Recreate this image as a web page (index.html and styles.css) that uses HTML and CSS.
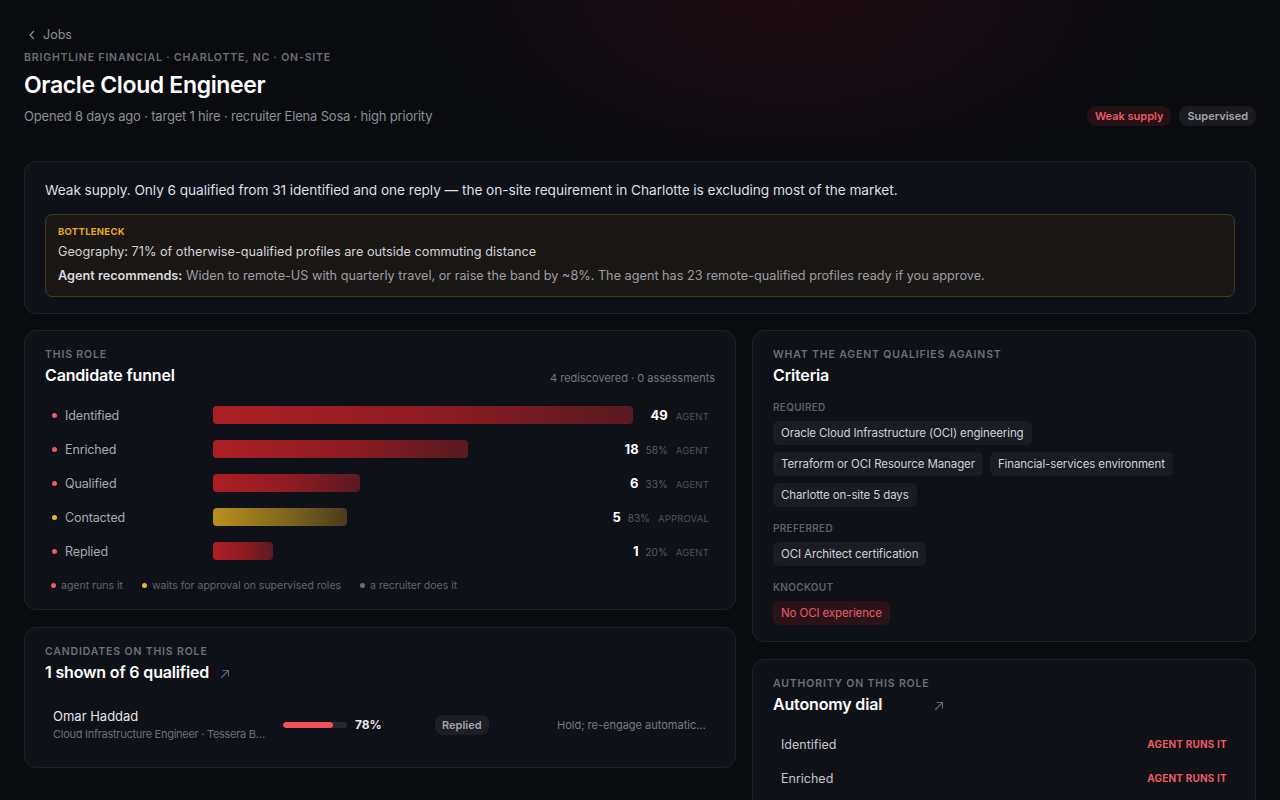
FILE: index.html
```html
<!DOCTYPE html>
<html>
<head>
    <title>Oracle Cloud Engineer · Jobs</title>
    <link rel="stylesheet" href="styles.css">
</head>
<body>
<div class="page">
    <header class="head">
        <a class="back" href="#">
            <svg width="10" height="10" viewBox="0 0 10 10"><path d="M6.5 1.5 3 5l3.5 3.5" fill="none" stroke="currentColor" stroke-width="1.3" stroke-linecap="round" stroke-linejoin="round"/></svg>
            Jobs
        </a>
        <div class="eyebrow">Brightline Financial · Charlotte, NC · On-site</div>
        <h1>Oracle Cloud Engineer</h1>
        <div class="head-row">
            <p class="meta">Opened 8 days ago · target 1 hire · recruiter Elena Sosa · high priority</p>
            <div class="badges">
                <span class="badge badge-red">Weak supply</span>
                <span class="badge">Supervised</span>
            </div>
        </div>
    </header>

    <section class="card summary">
        <p class="summary-text">Weak supply. Only 6 qualified from 31 identified and one reply — the on-site requirement in Charlotte is excluding most of the market.</p>
        <div class="bottleneck">
            <div class="bottleneck-label">Bottleneck</div>
            <p class="bottleneck-main">Geography: 71% of otherwise-qualified profiles are outside commuting distance</p>
            <p class="bottleneck-rec"><strong>Agent recommends:</strong> Widen to remote-US with quarterly travel, or raise the band by ~8%. The agent has 23 remote-qualified profiles ready if you approve.</p>
        </div>
    </section>

    <div class="grid">
        <div class="col">
            <section class="card funnel-card">
                <div class="card-head">
                    <div>
                        <div class="eyebrow">This role</div>
                        <h2>Candidate funnel</h2>
                    </div>
                    <div class="card-note">4 rediscovered · 0 assessments</div>
                </div>
                <div class="funnel">
                    <div class="stage">
                        <span class="stage-name"><i class="dot dot-red"></i>Identified</span>
                        <div class="track"><div class="bar" style="width: 100%"></div></div>
                        <span class="stats"><b>49</b><em class="tag">Agent</em></span>
                    </div>
                    <div class="stage">
                        <span class="stage-name"><i class="dot dot-red"></i>Enriched</span>
                        <div class="track"><div class="bar" style="width: 60.7%"></div></div>
                        <span class="stats"><b>18</b><span class="pct">58%</span><em class="tag">Agent</em></span>
                    </div>
                    <div class="stage">
                        <span class="stage-name"><i class="dot dot-red"></i>Qualified</span>
                        <div class="track"><div class="bar" style="width: 35%"></div></div>
                        <span class="stats"><b>6</b><span class="pct">33%</span><em class="tag">Agent</em></span>
                    </div>
                    <div class="stage">
                        <span class="stage-name"><i class="dot dot-amber"></i>Contacted</span>
                        <div class="track"><div class="bar bar-amber" style="width: 31.9%"></div></div>
                        <span class="stats"><b>5</b><span class="pct">83%</span><em class="tag">Approval</em></span>
                    </div>
                    <div class="stage">
                        <span class="stage-name"><i class="dot dot-red"></i>Replied</span>
                        <div class="track"><div class="bar" style="width: 14.3%"></div></div>
                        <span class="stats"><b>1</b><span class="pct">20%</span><em class="tag">Agent</em></span>
                    </div>
                </div>
                <div class="legend">
                    <span><i class="dot dot-red"></i>agent runs it</span>
                    <span><i class="dot dot-amber"></i>waits for approval on supervised roles</span>
                    <span><i class="dot dot-gray"></i>a recruiter does it</span>
                </div>
            </section>

            <section class="card cand-card">
                <div class="eyebrow">Candidates on this role</div>
                <h2 class="title-link">1 shown of 6 qualified
                    <svg width="12" height="12" viewBox="0 0 12 12"><path d="M2.5 9.5l7-7M4 2.5h5.5V8" fill="none" stroke="currentColor" stroke-width="1.1" stroke-linecap="round"/></svg>
                </h2>
                <div class="cand">
                    <div class="cand-who">
                        <div class="cand-name">Omar Haddad</div>
                        <div class="cand-sub">Cloud Infrastructure Engineer · Tessera Bank</div>
                    </div>
                    <div class="score">
                        <div class="score-track"><div class="score-fill" style="width: 78%"></div></div>
                        <b>78%</b>
                    </div>
                    <span class="pill">Replied</span>
                    <div class="cand-next">Hold; re-engage automatically in 30 days</div>
                </div>
            </section>
        </div>

        <div class="col">
            <section class="card crit-card">
                <div class="eyebrow">What the agent qualifies against</div>
                <h2>Criteria</h2>
                <div class="crit-label">Required</div>
                <div class="chips">
                    <span class="chip">Oracle Cloud Infrastructure (OCI) engineering</span>
                    <span class="chip">Terraform or OCI Resource Manager</span>
                    <span class="chip">Financial-services environment</span>
                    <span class="chip">Charlotte on-site 5 days</span>
                </div>
                <div class="crit-label">Preferred</div>
                <div class="chips">
                    <span class="chip">OCI Architect certification</span>
                </div>
                <div class="crit-label">Knockout</div>
                <div class="chips">
                    <span class="chip chip-red">No OCI experience</span>
                </div>
            </section>

            <section class="card">
                <div class="eyebrow">Authority on this role</div>
                <h2 class="title-link wide">Autonomy dial
                    <svg width="12" height="12" viewBox="0 0 12 12"><path d="M2.5 9.5l7-7M4 2.5h5.5V8" fill="none" stroke="currentColor" stroke-width="1.1" stroke-linecap="round"/></svg>
                </h2>
                <div class="dial">
                    <div class="dial-row"><span>Identified</span><em>Agent runs it</em></div>
                    <div class="dial-row"><span>Enriched</span><em>Agent runs it</em></div>
                    <div class="dial-row"><span>Qualified</span><em>Agent runs it</em></div>
                </div>
            </section>
        </div>
    </div>
</div>
</body>
</html>
```

FILE: styles.css
```css
html, body { height: 100%; }
body {
    margin: 0;
    background: #0a0b0f radial-gradient(ellipse 520px 260px at 62% 0%, rgba(110, 18, 30, 0.2), transparent 70%) no-repeat;
    color: #d6d7db;
    font-family: Inter, "Noto Sans", sans-serif;
    font-size: 14px;
    overflow: hidden;
}
p { margin: 0; }
h1, h2 { margin: 0; color: #fff; font-weight: 600; }

.page { padding: 26px 24px 0; }

.back { display: inline-flex; align-items: center; gap: 6px; color: #8a8d95; font-size: 12.5px; line-height: 16px; text-decoration: none; margin-left: 3px; }
.eyebrow { font-size: 10.5px; line-height: 12px; font-weight: 600; letter-spacing: 0.08em; text-transform: uppercase; color: #6c6f77; }
.head .eyebrow { margin-top: 9px; font-size: 10.5px; letter-spacing: 0.08em; }
h1 { font-size: 23px; letter-spacing: -0.015em; margin-top: 7px; line-height: 28px; }
.head-row { display: flex; justify-content: space-between; align-items: center; margin-top: 7px; }
.meta { color: #8b8e96; font-size: 13px; letter-spacing: -0.015em; }
.badges { display: flex; gap: 8px; }
.badge { background: #1b1b20; color: #a3a5ac; font-size: 11px; line-height: 14px; font-weight: 600; padding: 3px 8px; border-radius: 9px; }
.badge-red { background: #241116; color: #ec5a62; }

.card { background: #0f1118; border: 1px solid #1d2029; border-radius: 12px; padding: 18px 20px 17px; }

.summary { margin-top: 35px; padding: 18px 20px 16px; }
.summary-text { color: #dedfe3; font-size: 13.7px; line-height: 20px; letter-spacing: -0.005em; }
.bottleneck { margin-top: 14px; border: 1px solid #47371c; background: #1a1714; border-radius: 7px; padding: 11px 12px 12px; }
.bottleneck-label { color: #e8a825; font-size: 9.5px; line-height: 12px; font-weight: 700; letter-spacing: 0.03em; text-transform: uppercase; }
.bottleneck-main { margin-top: 5px; font-size: 12.7px; line-height: 17px; color: #d3d4d8; }
.bottleneck-rec { margin-top: 7px; font-size: 12.7px; line-height: 17px; color: #9c9ea5; }
.bottleneck-rec strong { color: #d9dade; font-weight: 600; }

.grid { display: grid; grid-template-columns: 712px 1fr; gap: 16px; margin-top: 16px; }
.col { display: flex; flex-direction: column; gap: 17px; }

h2 { font-size: 16px; margin-top: 3px; line-height: 22px; letter-spacing: -0.01em; }
.card-head { display: flex; justify-content: space-between; align-items: flex-end; }
.card-note { font-size: 11px; color: #74777f; padding-bottom: 1px; }

.funnel { margin-top: 20px; display: flex; flex-direction: column; gap: 16px; }
.stage { display: grid; grid-template-columns: 168px 420px minmax(0, 1fr); align-items: center; height: 18px; }
.stage-name { display: flex; align-items: center; font-size: 12.5px; color: #a6a8ae; padding-left: 7px; letter-spacing: -0.01em; }
.dot { display: inline-block; width: 5px; height: 5px; border-radius: 50%; margin-right: 8px; background: #ec5a62; }
.dot-amber { background: #e8b62a; }
.dot-gray { background: #6a6d75; }
.track { height: 18px; }
.bar { height: 100%; border-radius: 4px; background: linear-gradient(90deg, #ad1f24, #8c1c22 55%, #5a1a21); }
.bar-amber { background: linear-gradient(90deg, #b8901d, #7a621e 60%, #4a3c1c); }
.stats { display: flex; justify-content: flex-end; align-items: baseline; gap: 7px; padding-right: 6px; min-width: 0; }
.stats > * { flex-shrink: 0; }
.stats b { color: #fff; font-size: 13px; font-weight: 700; }
.pct { color: #585b63; font-size: 10px; }
.tag { font-style: normal; color: #4f525a; font-size: 9.5px; letter-spacing: 0.02em; text-transform: uppercase; margin-left: 1px; }

.legend { display: flex; gap: 19px; margin-top: 19px; padding-left: 6px; font-size: 10.5px; line-height: 13px; color: #62656d; }
.legend span { display: flex; align-items: center; }
.legend .dot { margin-right: 5px; }

.title-link { display: flex; align-items: center; gap: 10px; }
.title-link svg { color: #666a72; margin-top: 3px; }
.title-link.wide { gap: 0; }
.title-link.wide svg { margin-left: 51px; }

.cand-card { padding-bottom: 18px; }
.cand { display: grid; grid-template-columns: 230px 152px 122px 1fr; align-items: center; padding: 8px; margin-top: 17px; }
.cand-name { font-size: 13px; line-height: 16px; color: #e3e4e7; }
.cand-sub { font-size: 11px; line-height: 14px; color: #6c6f77; margin-top: 3px; white-space: nowrap; overflow: hidden; text-overflow: ellipsis; width: 215px; letter-spacing: -0.025em; }
.score { display: flex; align-items: center; gap: 8px; }
.score-track { width: 64px; height: 6px; border-radius: 3px; background: #262830; overflow: hidden; }
.score-fill { height: 100%; background: #ef5259; border-radius: 3px; }
.score b { font-size: 12px; color: #e8e9ec; }
.pill { justify-self: start; background: #1d1f26; color: #a0a3aa; font-size: 11px; font-weight: 600; padding: 3px 7px; border-radius: 8px; }
.cand-next { font-size: 11px; color: #777a82; white-space: nowrap; overflow: hidden; text-overflow: ellipsis; width: 150px; justify-self: end; }

.crit-card { padding-bottom: 16px; }
.crit-label { margin-top: 15px; font-size: 10px; line-height: 12px; font-weight: 600; color: #5d6068; text-transform: uppercase; letter-spacing: 0.03em; }
.chips { display: flex; flex-wrap: wrap; gap: 7px 7px; margin-top: 8px; }
.chip { background: #1a1c23; color: #d0d1d5; font-size: 11.5px; line-height: 24px; padding: 0 8px; border-radius: 6px; letter-spacing: -0.01em; }
.chip-red { background: #2a141a; color: #ec5a62; }

.dial { margin-top: 20px; display: flex; flex-direction: column; gap: 16px; padding: 0 8px; }
.dial-row { display: flex; justify-content: space-between; align-items: center; height: 18px; }
.dial-row span { font-size: 12.5px; color: #c6c7cc; }
.dial-row em { font-style: normal; font-size: 10px; font-weight: 700; color: #ec5a62; letter-spacing: 0.02em; text-transform: uppercase; }
```
